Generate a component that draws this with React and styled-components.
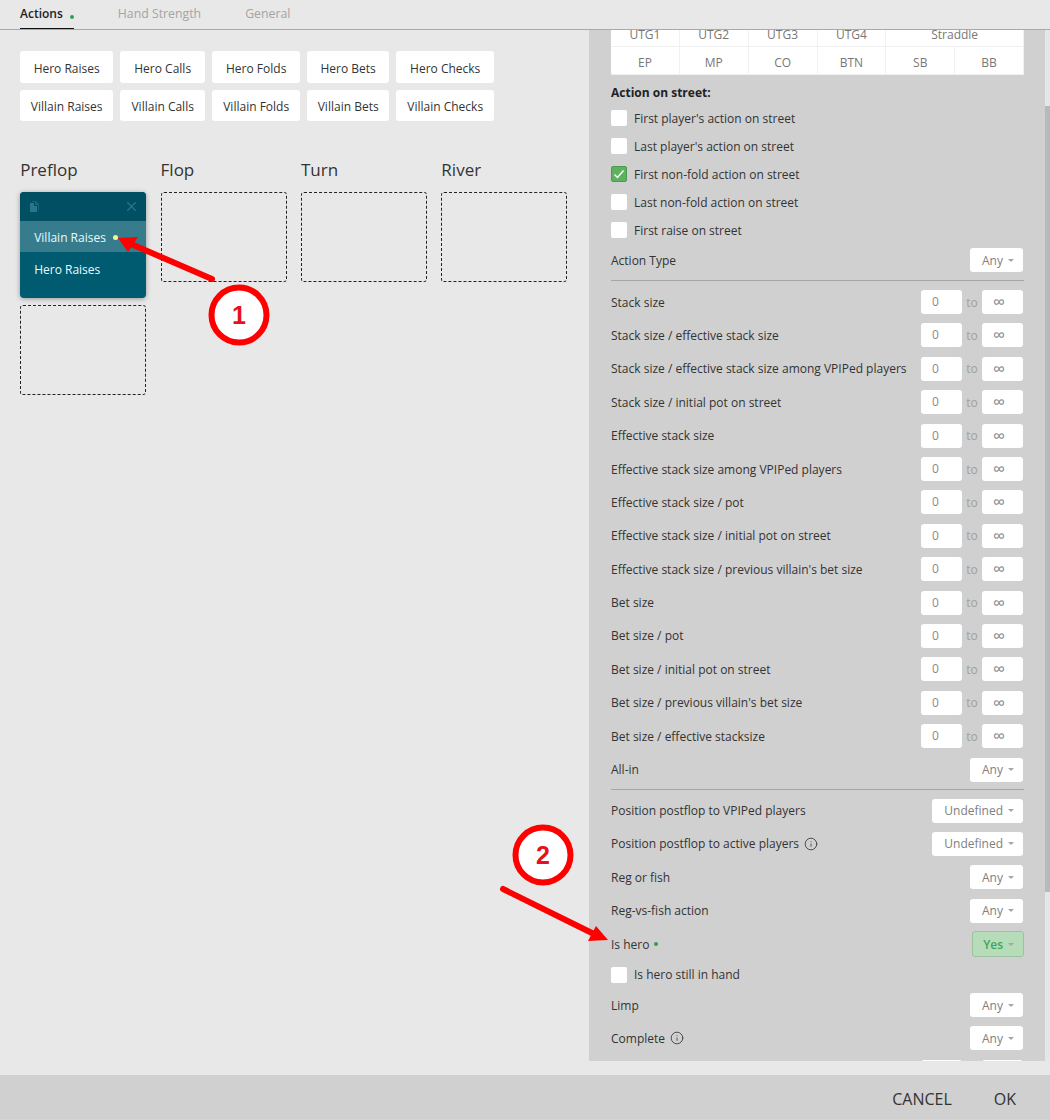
import React from 'react'
import styled, { createGlobalStyle } from 'styled-components'
import { Info, X } from 'lucide-react'

// =============================================================================
const Global = createGlobalStyle`
  html, body { margin: 0; padding: 0; background: #e8e8e8; }
  * { box-sizing: border-box; }
  body { font-family: "Open Sans", "Liberation Sans", sans-serif; font-size: 12px; color: #333; }
`

const Page = styled.div`
  position: relative;
  width: 1050px;
  height: 1119px;
  overflow: hidden;
  display: flex;
  flex-direction: column;
  background: #e8e8e8;
`

// Tabs
const Tabs = styled.div`
  height: 30px;
  flex: none;
  display: flex;
  padding-left: 20px;
  border-bottom: 1px solid #a9a9a9;
`
const Tab = styled.div`
  height: 29px;
  margin-right: ${p => p.$gap}px;
  padding-top: 5px;
  line-height: 17px;
  display: flex;
  gap: 7px;
  font-size: ${p => (p.$active ? 12 : 12.3)}px;
  font-weight: ${p => (p.$active ? 600 : 400)};
  color: ${p => (p.$active ? '#222' : '#a4a4a4')};
  border-bottom: ${p => (p.$active ? '1px solid #111' : 'none')};
`
const Dot = styled.span`
  width: ${p => p.$size || 4}px;
  height: ${p => p.$size || 4}px;
  border-radius: 50%;
  align-self: center;
  flex: none;
  background: ${p => p.$color || '#2ca24c'};
`

const Main = styled.div`
  display: flex;
  height: 1031px;
  flex: none;
`
const Left = styled.div`
  width: 589px;
  flex: none;
  padding: 21px 0 0 20.2px;
`

// Action buttons
const Buttons = styled.div`
  display: grid;
  grid-template-columns: 93px 85px 88px 82px 98px;
  grid-template-rows: 32px 31px;
  gap: 7px;
`
const ActionButton = styled.div`
  background: #fff;
  border-radius: 3px;
  display: flex;
  align-items: center;
  justify-content: center;
  padding-top: 2px;
  color: #333;
`

// Streets
const Streets = styled.div`
  display: grid;
  grid-template-columns: repeat(4, 126px);
  column-gap: 14.4px;
  margin-top: 37px;
`
const Street = styled.div`
  display: flex;
  flex-direction: column;
`
const StreetTitle = styled.div`
  font-size: 17px;
  line-height: 24px;
  height: 34px;
  color: #333;
`
const Slot = styled.div`
  height: 90px;
  border: 1px dashed #222;
  border-radius: 3px;
`
const Card = styled.div`
  height: 106px;
  margin-bottom: 7px;
  background: #005a70;
  border-radius: 4px;
  box-shadow: 0 1px 5px rgba(0, 0, 0, .35);
  overflow: hidden;
`
const CardHeader = styled.div`
  height: 29px;
  display: flex;
  align-items: center;
  justify-content: space-between;
  padding: 0 7px 0 10px;
  background: #004f63;
  color: #2a7589;
`
const CardRow = styled.div`
  height: ${p => p.$h}px;
  display: flex;
  align-items: center;
  gap: 7px;
  padding: 2px 0 0 14px;
  color: #eafaff;
  background: ${p => (p.$active ? '#367c8c' : 'transparent')};
`

// Right panel
const Panel = styled.div`
  width: 461px;
  flex: none;
  display: flex;
  background: #d0d0d0;
`
const PanelBody = styled.div`
  width: 456px;
  flex: none;
  height: 100%;
  overflow: hidden;
  padding: 0 21px 0 22px;
`
const Scrolled = styled.div`
  margin-top: -11px;
`
const Track = styled.div`
  width: 5px;
  background: #e6e6e6;
  padding-top: 76px;
`
const Thumb = styled.div`
  height: 786px;
  background: #b9b9b9;
`
const Positions = styled.div`
  display: grid;
  grid-template-columns: repeat(6, 1fr);
  grid-auto-rows: 28px;
  background: #fff;
  border-radius: 0 0 3px 3px;
`
const Position = styled.div`
  display: flex;
  align-items: center;
  justify-content: center;
  padding-top: 4px;
  color: #777;
  grid-column: span ${p => p.$span || 1};
  border-right: 1px solid #f1f1f1;
  border-bottom: 1px solid #f1f1f1;
`
const Heading = styled.div`
  height: 29px;
  padding-top: 5px;
  display: flex;
  align-items: center;
  font-weight: 700;
  color: #222;
`
const CheckRow = styled.div`
  height: ${p => p.$h || 28}px;
  display: flex;
  align-items: center;
  gap: 7px;
`
const Box = styled.span`
  width: 16px;
  height: 16px;
  flex: none;
  border-radius: 2px;
  display: flex;
  align-items: center;
  justify-content: center;
  background: ${p => (p.$checked ? '#5cb25f' : '#fff')};
  border: ${p => (p.$checked ? '1px solid #4a9a50' : 'none')};
`
const Row = styled.div`
  height: ${p => p.$h || 33.4}px;
  display: flex;
  align-items: center;
  justify-content: space-between;
  padding-right: 1px;
`
const Label = styled.div`
  display: flex;
  align-items: center;
  gap: 5px;
  color: #333;
`
const Divider = styled.div`
  height: 1px;
  background: #a6a6a6;
  margin: ${p => p.$top}px 0 ${p => p.$bottom}px;
`
const Select = styled.div`
  width: ${p => p.$w || 53}px;
  height: ${p => (p.$on ? 26 : 24)}px;
  margin-right: ${p => (p.$on ? -1 : 0)}px;
  border-radius: 3px;
  display: flex;
  align-items: center;
  justify-content: flex-end;
  gap: 5px;
  padding-right: 9px;
  background: ${p => (p.$on ? '#b6dcb9' : '#fff')};
  border: ${p => (p.$on ? '1px solid #9cc3a0' : 'none')};
  color: ${p => (p.$on ? '#3ba659' : '#808080')};
  font-weight: ${p => (p.$on ? 600 : 400)};
`
const Caret = styled.span`
  width: 0;
  height: 0;
  border-left: 3px solid transparent;
  border-right: 3px solid transparent;
  border-top: 3px solid #a5a5a5;
`
const Range = styled.div`
  display: flex;
  align-items: center;
`
const Input = styled.div`
  width: 41px;
  height: 24px;
  background: #fff;
  border-radius: 3px;
  color: #888;
  font-size: ${p => (p.$infinite ? 17 : 12)}px;
  line-height: 24px;
  padding-left: 11px;
`
const To = styled.span`
  width: 20px;
  text-align: center;
  color: #a0a0a0;
`

// Footer
const Footer = styled.div`
  height: 44px;
  margin-top: 14px;
  flex: none;
  display: flex;
  align-items: center;
  justify-content: flex-end;
  gap: 42px;
  padding: 3px 34px 0 0;
  background: #d0d0d0;
  font-size: 16px;
  color: #333;
`

// Annotations drawn over the screenshot
const Overlay = styled.svg`
  position: absolute;
  left: 0;
  top: 0;
  pointer-events: none;
`

const heroButtons = ['Raises', 'Calls', 'Folds', 'Bets', 'Checks']
const checks = [
  ["First player's action on street"],
  ["Last player's action on street"],
  ['First non-fold action on street', true],
  ['Last non-fold action on street'],
  ['First raise on street'],
]
const ranges = [
  'Stack size',
  'Stack size / effective stack size',
  'Stack size / effective stack size among VPIPed players',
  'Stack size / initial pot on street',
  'Effective stack size',
  'Effective stack size among VPIPed players',
  'Effective stack size / pot',
  'Effective stack size / initial pot on street',
  "Effective stack size / previous villain's bet size",
  'Bet size',
  'Bet size / pot',
  'Bet size / initial pot on street',
  "Bet size / previous villain's bet size",
  'Bet size / effective stacksize',
]

const Dropdown = ({ value = 'Any', w, on }) => (
  <Select $w={w} $on={on}>{value}<Caret /></Select>
)

const RangeRow = ({ label }) => (
  <Row>
    <Label>{label}</Label>
    <Range>
      <Input>0</Input>
      <To>to</To>
      <Input $infinite>∞</Input>
    </Range>
  </Row>
)

const CopyIcon = () => (
  <svg width="10" height="11" viewBox="0 0 10 11" fill="currentColor">
    <path d="M1 0 H6 L9 3 V9 H8 V4 H5 V1 H2 V0 Z" opacity=".6" />
    <path d="M0 2 H4 V5 H7 V11 H0 Z" />
  </svg>
)

const Callout = ({ cx, cy, n }) => (
  <g>
    <circle cx={cx} cy={cy} r="27.5" fill="#fff" stroke="#f00" strokeWidth="6" />
    <text x={cx} y={cy + 9} textAnchor="middle" fontFamily="Liberation Sans" fontWeight="700" fontSize="25" fill="#e8101c">{n}</text>
  </g>
)

const App = () => (
  <Page>
    <Global />
    <Tabs>
      <Tab $active $gap={44}>Actions <Dot /></Tab>
      <Tab $gap={44}>Hand Strength</Tab>
      <Tab $gap={0}>General</Tab>
    </Tabs>
    <Main>
      <Left>
        <Buttons>
          {heroButtons.map(b => <ActionButton key={b}>Hero {b}</ActionButton>)}
          {heroButtons.map(b => <ActionButton key={b}>Villain {b}</ActionButton>)}
        </Buttons>
        <Streets>
          <Street>
            <StreetTitle>Preflop</StreetTitle>
            <Card>
              <CardHeader>
                <CopyIcon />
                <X size={15} />
              </CardHeader>
              <CardRow $active $h={31}>Villain Raises <Dot $color="#eaff8c" $size={5} /></CardRow>
              <CardRow $h={33}>Hero Raises</CardRow>
            </Card>
            <Slot />
          </Street>
          {['Flop', 'Turn', 'River'].map(s => (
            <Street key={s}>
              <StreetTitle>{s}</StreetTitle>
              <Slot />
            </Street>
          ))}
        </Streets>
      </Left>
      <Panel>
        <PanelBody>
          <Scrolled>
            <Positions>
              {['UTG1', 'UTG2', 'UTG3', 'UTG4'].map(p => <Position key={p}>{p}</Position>)}
              <Position $span={2}>Straddle</Position>
              {['EP', 'MP', 'CO', 'BTN', 'SB', 'BB'].map(p => <Position key={p}>{p}</Position>)}
            </Positions>
            <Heading>Action on street:</Heading>
            {checks.map(([label, checked]) => (
              <CheckRow key={label}>
                <Box $checked={checked}>
                  {checked && (
                    <svg width="12" height="10" viewBox="0 0 12 10">
                      <path d="M1.5 5.5 L4.5 8.5 L10.5 1.5" fill="none" stroke="#fff" strokeWidth="1.4" />
                    </svg>
                  )}
                </Box>
                {label}
              </CheckRow>
            ))}
            <Row $h={32}><Label>Action Type</Label><Dropdown /></Row>
            <Divider $top={4} $bottom={4.4} />
            {ranges.map(r => <RangeRow key={r} label={r} />)}
            <Row><Label>All-in</Label><Dropdown /></Row>
            <Divider $top={2.4} $bottom={4.2} />
            <Row><Label>Position postflop to VPIPed players</Label><Dropdown value="Undefined" w={91} /></Row>
            <Row><Label>Position postflop to active players <Info size={14} strokeWidth={1.4} /></Label><Dropdown value="Undefined" w={91} /></Row>
            <Row><Label>Reg or fish</Label><Dropdown /></Row>
            <Row><Label>Reg-vs-fish action</Label><Dropdown /></Row>
            <Row><Label>Is hero <Dot $size={4} /></Label><Dropdown value="Yes" w={52} on /></Row>
            <CheckRow $h={28.4}><Box />Is hero still in hand</CheckRow>
            <Row $h={32.6}><Label>Limp</Label><Dropdown /></Row>
            <Row><Label>Complete <Info size={14} strokeWidth={1.4} /></Label><Dropdown /></Row>
            <RangeRow label="Bet size" />
          </Scrolled>
        </PanelBody>
        <Track><Thumb /></Track>
      </Panel>
    </Main>
    <Footer>
      <span>CANCEL</span>
      <span>OK</span>
    </Footer>
    <Overlay width="1050" height="1119" viewBox="0 0 1050 1119">
      <path d="M212 279 L131 244" stroke="#f00" strokeWidth="6" strokeLinecap="round" />
      <polygon points="118,238 138,237 128,252" fill="#f00" />
      <Callout cx={239} cy={315} n="1" />
      <path d="M503 889 L594 934" stroke="#f00" strokeWidth="6" strokeLinecap="round" />
      <polygon points="608,940 596,926 588,941" fill="#f00" />
      <Callout cx={543} cy={855} n="2" />
    </Overlay>
  </Page>
)

export default App
